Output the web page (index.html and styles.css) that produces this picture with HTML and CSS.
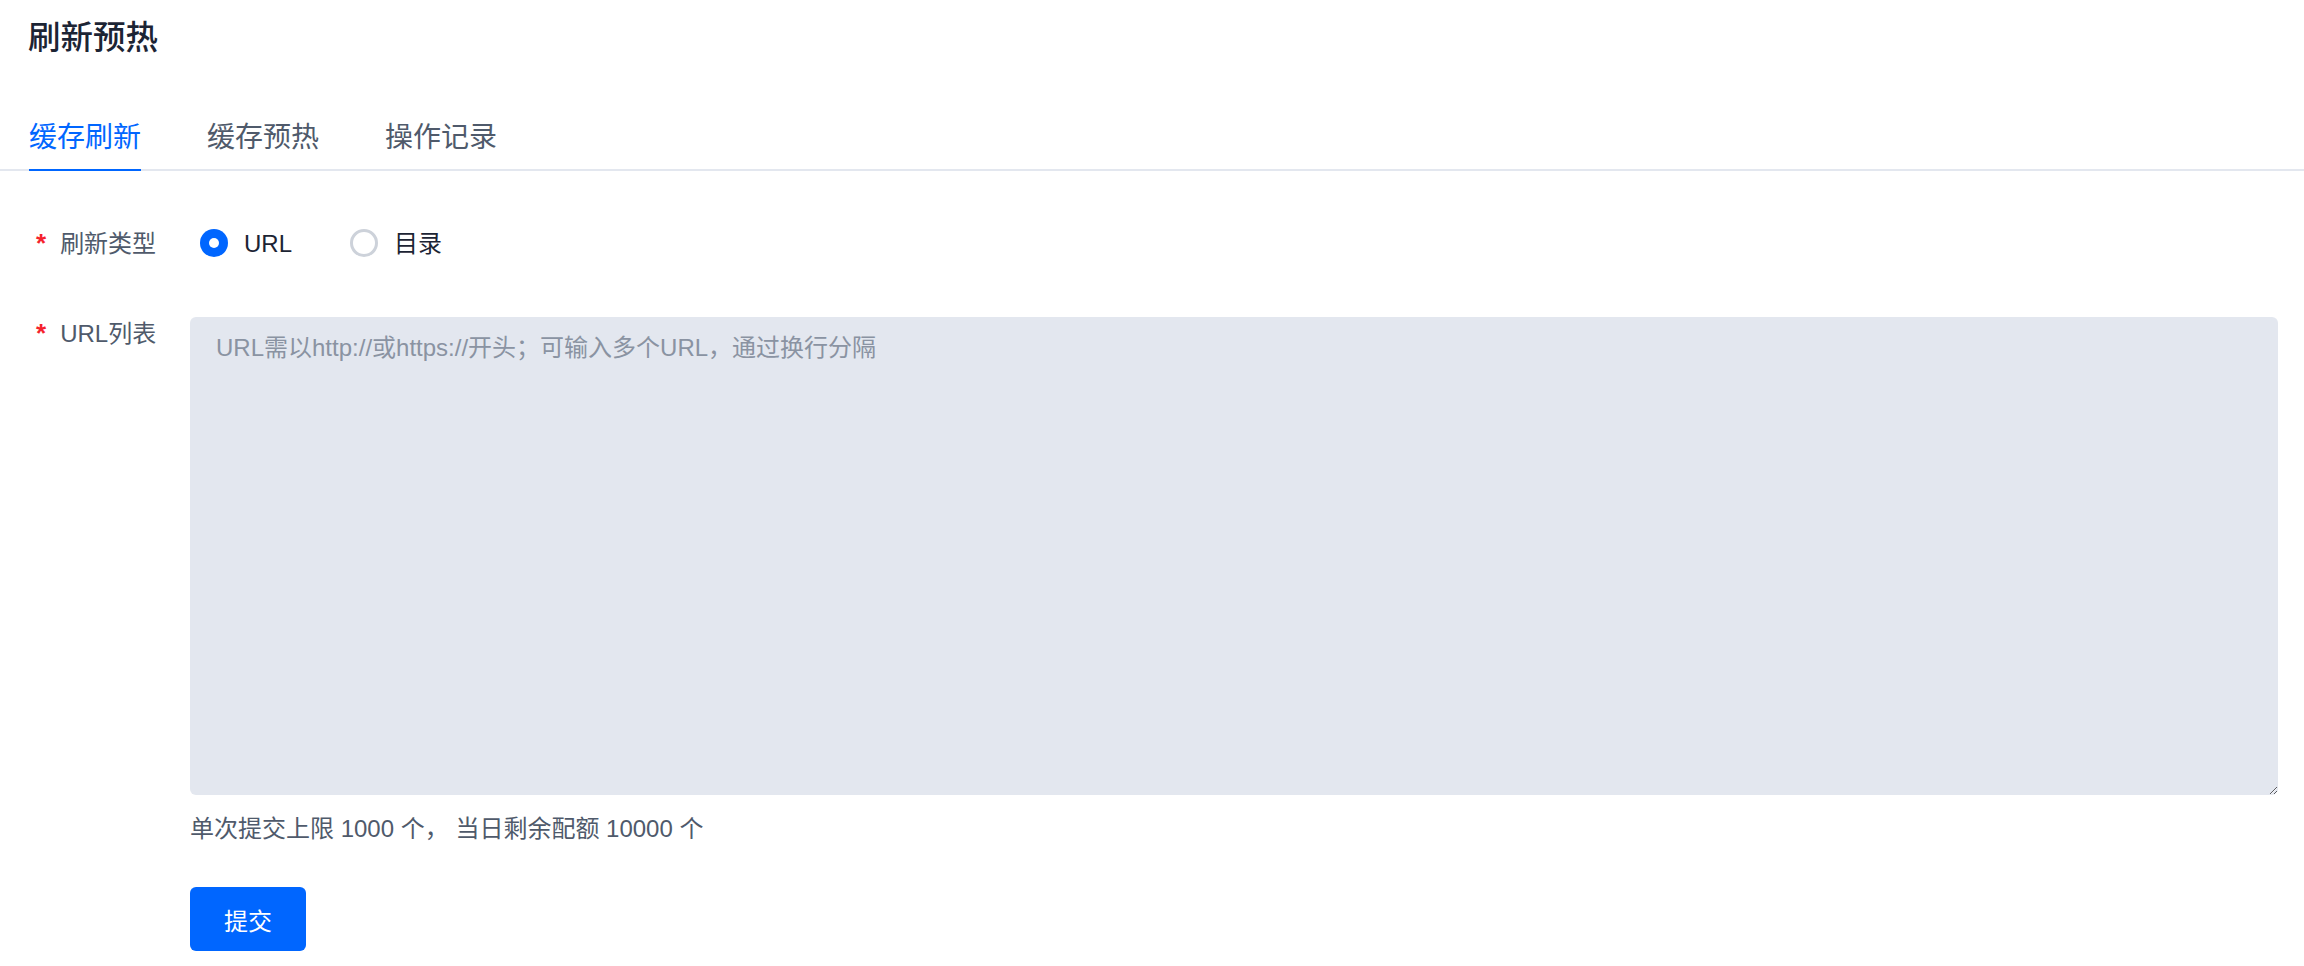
FILE: index.html
```html
<!DOCTYPE html>
<html lang="zh-CN">
<head>
<meta charset="utf-8">
<title>刷新预热</title>
<link rel="stylesheet" href="styles.css">
</head>
<body>
<div class="page">
  <h1 class="title">刷新预热</h1>
  <nav class="tabs">
    <a class="tab active">缓存刷新</a>
    <a class="tab">缓存预热</a>
    <a class="tab">操作记录</a>
  </nav>
  <form class="form">
    <div class="row">
      <div class="label"><span class="star">*</span>刷新类型</div>
      <div class="control radios">
        <label class="radio checked"><span class="dot"></span><span class="radio-text">URL</span></label>
        <label class="radio"><span class="dot"></span><span class="radio-text">目录</span></label>
      </div>
    </div>
    <div class="row row-top">
      <div class="label"><span class="star">*</span>URL列表</div>
      <div class="control grow">
        <textarea class="textarea" placeholder="URL需以http://或https://开头；可输入多个URL，通过换行分隔"></textarea>
        <div class="help">单次提交上限 1000 个， 当日剩余配额 10000 个</div>
        <button type="button" class="btn">提交</button>
      </div>
    </div>
  </form>
</div>
</body>
</html>
```

FILE: styles.css
```css
* { box-sizing: border-box; }
html, body {
  margin: 0;
  padding: 0;
  background: #ffffff;
}
body {
  font-family: "Liberation Sans", "Noto Sans CJK SC", sans-serif;
  color: #1f2937;
}
.page {
  width: 2304px;
  min-height: 966px;
}
.title {
  margin: 0;
  padding: 16px 0 0 28px;
  font-size: 32.5px;
  line-height: 44px;
  font-weight: 500;
  color: #1c2434;
}
.tabs {
  display: flex;
  gap: 66px;
  margin-top: 58px;
  padding-left: 29px;
  border-bottom: 2px solid #e3e7ef;
}
.tab {
  display: block;
  font-size: 28px;
  line-height: 40px;
  padding-bottom: 11px;
  color: #4f5a6b;
  border-bottom: 2px solid transparent;
  margin-bottom: -2px;
}
.tab.active {
  color: #0066ff;
  border-bottom-color: #0066ff;
}
.form {
  padding: 54px 26px 0 29px;
}
.row {
  display: flex;
  align-items: center;
  min-height: 36px;
}
.row-top {
  align-items: flex-start;
  margin-top: 55px;
}
.label {
  width: 161px;
  flex: none;
  display: flex;
  align-items: center;
  padding-left: 7px;
  font-size: 24px;
  line-height: 35px;
  color: #4f5a6b;
}
.star {
  color: #f5222d;
  margin-right: 14px;
  font-size: 26px;
  font-weight: 700;
}
.control.grow {
  flex: 1;
  display: flex;
  flex-direction: column;
  align-items: flex-start;
}
.radios {
  display: flex;
  align-items: center;
  gap: 58px;
  padding-left: 10px;
}
.radio {
  display: flex;
  align-items: center;
  gap: 16px;
  font-size: 24px;
  line-height: 35px;
  color: #1c2434;
}
.dot {
  width: 28px;
  height: 28px;
  border-radius: 50%;
  border: 3px solid #cdd2da;
  background: #ffffff;
  position: relative;
  flex: none;
}
.radio.checked .dot {
  border: none;
  background: #0066ff;
}
.radio.checked .dot::after {
  content: "";
  position: absolute;
  left: 9px;
  top: 9px;
  width: 10px;
  height: 10px;
  border-radius: 50%;
  background: #ffffff;
}
.textarea {
  display: block;
  width: 100%;
  height: 478px;
  margin: 1px 0 0 0;
  padding: 13px 26px;
  border: none;
  border-radius: 6px;
  background: #e3e7ef;
  font-family: "Liberation Sans", "Noto Sans CJK SC", sans-serif;
  font-size: 24px;
  line-height: 35px;
  color: #1c2434;
  resize: vertical;
  outline: none;
}
.textarea::placeholder {
  color: #8a93a2;
}
.help {
  margin-top: 16px;
  font-size: 24px;
  line-height: 35px;
  color: #4f5a6b;
}
.btn {
  margin-top: 41px;
  width: 116px;
  height: 64px;
  border: none;
  border-radius: 6px;
  background: #0066ff;
  color: #ffffff;
  font-family: "Liberation Sans", "Noto Sans CJK SC", sans-serif;
  font-size: 24px;
  padding: 0;
  cursor: pointer;
}
```
